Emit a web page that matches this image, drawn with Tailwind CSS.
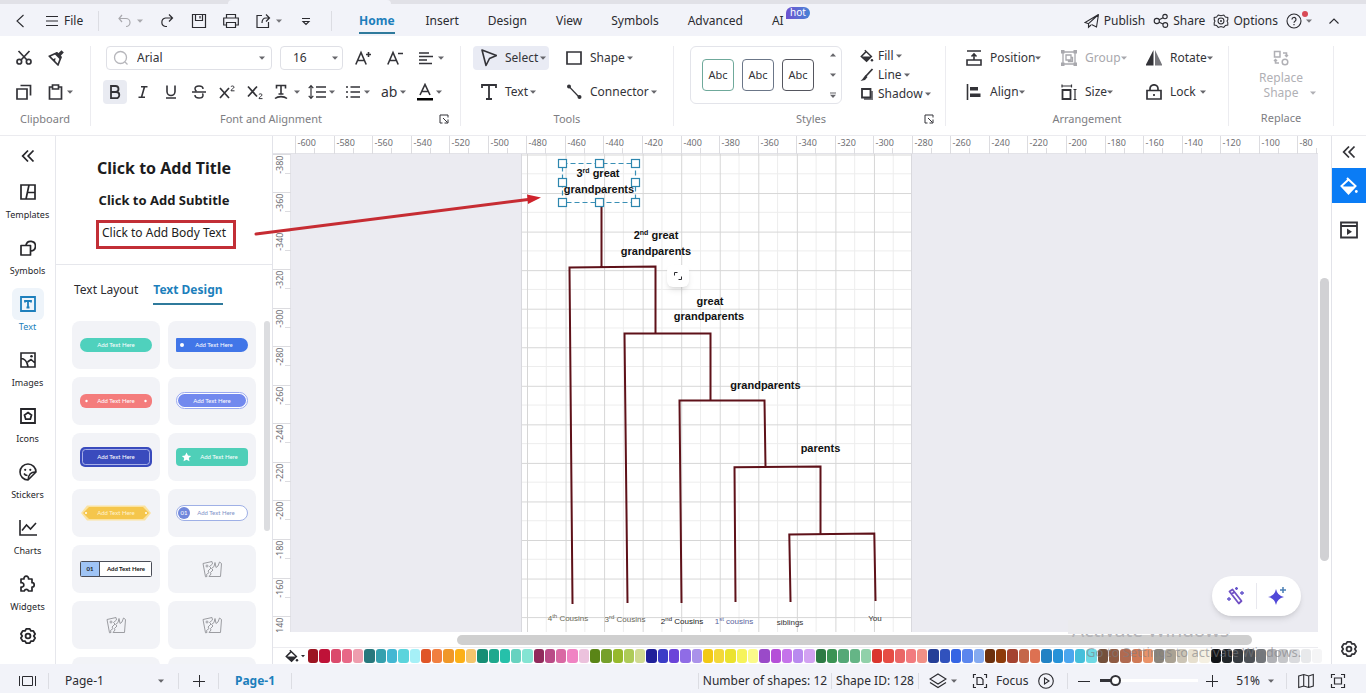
<!DOCTYPE html>
<html lang="en">
<head>
  <meta charset="UTF-8">
  <meta name="viewport" content="width=device-width, initial-scale=1.0">
  <title>Page-1 - Diagram Editor</title>
  <script src="https://cdn.jsdelivr.net/npm/@tailwindcss/browser@4"></script>
</head>
<body class="h-screen flex flex-col overflow-hidden bg-white font-['Noto_Sans',sans-serif] text-xs text-[#2b2b30]">

  <!-- Icon sprite -->
  <svg class="hidden" xmlns="http://www.w3.org/2000/svg">
    <symbol id="caret" viewBox="0 0 6 4"><path d="M0 .5h6L3 3.8z" fill="currentColor"/></symbol>
    <symbol id="caret-up" viewBox="0 0 6 4"><path d="M0 3.5h6L3 .2z" fill="currentColor"/></symbol>
    <symbol id="more" viewBox="0 0 16 16"><path d="M4 5.500h8M5 8.500l3 3 3-3z" fill="none" stroke="currentColor" stroke-width="1.100"/></symbol>
    <symbol id="bucket" viewBox="0 0 16 16"><path d="M5.500 1.500 13 8.500l-5.500 5.500L1.500 8.500 7 3" fill="none" stroke="currentColor" stroke-width="1.700"/><path d="M2 8.500h11l-5.500 5.500z" fill="currentColor"/><circle cx="13.700" cy="12.800" r="1.400" fill="currentColor"/></symbol>
    <symbol id="gear" viewBox="0 0 20 20"><path d="M8 2h4l1.200 2.400 2.700-.1 2 3.500L16.400 10l1.500 2.200-2 3.500-2.700-.1L12 18H8l-1.200-2.400-2.700.1-2-3.500L3.600 10 2.100 7.800l2-3.500 2.700.1z" fill="none" stroke="currentColor" stroke-width="2" stroke-linejoin="round"/><circle cx="10" cy="10" r="2.700" fill="none" stroke="currentColor" stroke-width="2"/></symbol>
    <symbol id="collapse" viewBox="0 0 14 14"><path d="M7 1.500 1.700 7 7 12.500M12.500 1.500 7.200 7l5.300 5.500" fill="none" stroke="currentColor" stroke-width="1.800"/></symbol>
    <symbol id="launcher" viewBox="0 0 10 10"><path d="M3.500 9H1V1h8v2.500M4 4l4.500 4.500M9 5.500V9H5.500" fill="none" stroke="currentColor" stroke-width="1"/></symbol>
    <symbol id="broken" viewBox="0 0 22 18"><g fill="none" stroke="#9c9da2" stroke-width="1" stroke-linejoin="round"><path d="M2 3.500 11 1.500 11.500 4 8.500 6.500 10 8 7 11l1 1.500-2.500 2L6 16.500 4.500 16.800z"/><path d="M14 2.500 13 6.500l-2.500 2 1.500 1.500-2.500 2.500.5 1.500L8 16.500h11.500L20.500 3.500 18.500 2 17 6l-2 1.500z"/><circle cx="6" cy="6" r="1"/></g></symbol>
  </svg>

  <!-- Window edge with the open document tab -->
  <div class="flex h-1 shrink-0 bg-[#e1e1e7]">
    <div class="ml-[228px] w-[163px] rounded-t-sm bg-[#f2f3f9]"></div>
  </div>

  <!-- Menu bar -->
  <header class="flex h-8 shrink-0 items-center bg-[#f2f3f9] pt-0.5">
    <button class="flex w-10 justify-center" aria-label="Back"><svg class="h-4 w-4" viewBox="0 0 16 16"><path d="M11.500 2 5 8l6.500 6" fill="none" stroke="currentColor" stroke-width="1.100"/></svg></button>
    <button class="ml-[6px] flex w-[52px] items-center gap-[6px]"><svg class="h-3 w-3" viewBox="0 0 12 12"><path d="M0 1.500h12M0 6h12M0 10.500h12" stroke="currentColor" stroke-width="1.100"/></svg>File</button>
    <div class="h-5 w-px bg-[#dcdde3]"></div>
    <div class="ml-[17px] flex items-center gap-4">
      <button class="flex items-center gap-[5px] text-[#a9a9ae]" aria-label="Undo"><svg class="h-4 w-4" viewBox="0 0 16 16"><path d="M6 2 3 5.500 6 9M3 5.500h7a4 4 0 0 1 0 8" fill="none" stroke="currentColor" stroke-width="1.200"/></svg><svg class="h-1 w-1.5"><use href="#caret"/></svg></button>
      <button aria-label="Redo"><svg class="h-4 w-4" viewBox="0 0 16 16"><path d="M10 1.500 13.500 5 10 8.500M13.500 5H6.500a4.300 4.300 0 0 0 0 8.500H8" fill="none" stroke="currentColor" stroke-width="1.200"/></svg></button>
      <button aria-label="Save"><svg class="h-4 w-4" viewBox="0 0 16 16"><path d="M1.500 1.500h13v13h-13zM4.500 1.500v6h7v-6M9 3v2.500" fill="none" stroke="currentColor" stroke-width="1.200"/></svg></button>
      <button aria-label="Print"><svg class="h-4 w-4" viewBox="0 0 16 16"><path d="M3.500 5V1.500h9V5M3.500 12H.7V5h14.600v7h-2.800M3.500 9.500h9v5h-9z" fill="none" stroke="currentColor" stroke-width="1.200"/></svg></button>
      <button class="flex items-center gap-[5px]" aria-label="Export"><svg class="h-4 w-4" viewBox="0 0 16 16"><path d="M7 2.500H2v12h11.500V9M11 1.500 14.500 5 11 8.500M14.500 5H11c-3 0-4 2-4 5" fill="none" stroke="currentColor" stroke-width="1.200"/></svg><svg class="h-1 w-1.5 text-[#77777c]"><use href="#caret"/></svg></button>
      <button aria-label="More"><svg class="h-4 w-4"><use href="#more"/></svg></button>
    </div>
    <div class="ml-[17px] h-5 w-px bg-[#dcdde3]"></div>
    <nav class="ml-[27px] flex h-full items-center gap-[29px]">
      <a href="#" class="relative mr-0.5 flex h-full items-center font-bold text-[#1d7fbc] after:absolute after:inset-x-0 after:bottom-0.5 after:h-0.5 after:bg-[#2f7a9c]">Home</a>
      <a href="#">Insert</a>
      <a href="#">Design</a>
      <a href="#">View</a>
      <a href="#">Symbols</a>
      <a href="#">Advanced</a>
      <a href="#" class="relative">AI<span class="absolute -top-1.5 left-3.5 flex h-3 w-6 items-center justify-center rounded-md rounded-bl-none bg-linear-to-r from-[#6b50d0] to-[#4483d6] text-[10px] text-white">hot</span></a>
    </nav>
    <div class="ml-auto flex items-center gap-2 pr-6">
      <button class="flex items-center gap-1"><svg class="h-4 w-4" viewBox="0 0 16 16"><path d="M14.500 1.500 1 9.500l3.500 1.200zM14.500 1.500 4.500 10.700v3.500L7 12M14.500 1.500 12.500 14l-5-2.500" fill="none" stroke="currentColor" stroke-width="1.100"/></svg>Publish</button>
      <button class="flex items-center gap-1"><svg class="h-4 w-4" viewBox="0 0 16 16"><g fill="none" stroke="currentColor" stroke-width="1.100"><circle cx="3.800" cy="8" r="2.600"/><circle cx="12" cy="3.600" r="2.200"/><circle cx="12.300" cy="12" r="2.400"/><path d="m6.200 6.800 3.900-2.100M6.200 9.200l3.900 1.800"/></g></svg>Share</button>
      <button class="flex items-center gap-1"><svg class="h-4 w-4" viewBox="0 0 20 20"><path d="M6.500 2.500 10 3.500l3.500-1 2 2.500 3 .5v3l-1 1.500 1 2v3l-3 .5-2 2.500-3.500-1-3.500 1-2-2.500-3-.5v-3l1-2-1-1.500v-3l3-.5z" fill="none" stroke="currentColor" stroke-width="1.300"/><circle cx="10" cy="10" r="3.700" fill="none" stroke="currentColor" stroke-width="1.300"/><circle cx="10" cy="10" r="1.200" fill="currentColor"/></svg>Options</button>
      <button class="relative flex items-center gap-1" aria-label="Help"><svg class="h-4 w-4" viewBox="0 0 16 16"><circle cx="8" cy="8" r="7" fill="none" stroke="currentColor" stroke-width="1.100"/><path d="M6 6.500a2 2 0 1 1 3 1.700c-.7.400-1 .7-1 1.500M8 11v1.200" fill="none" stroke="currentColor" stroke-width="1.200"/></svg><svg class="h-1 w-1.5 text-[#77777c]"><use href="#caret"/></svg><span class="absolute -top-0.5 left-4 size-1.5 rounded-full bg-[#d84a56]"></span></button>
      <button class="ml-1.5" aria-label="Collapse ribbon"><svg class="h-4 w-4" viewBox="0 0 16 16"><path d="M3.500 10.500 8 6l4.500 4.500" fill="none" stroke="currentColor" stroke-width="1.100"/></svg></button>
    </div>
  </header>

  <!-- Ribbon -->
  <section class="flex h-[100px] shrink-0 border-b border-[#ebebef] pt-[10px] text-[#333338]">
    <div class="flex w-[90px] shrink-0 flex-col">
      <div class="grid grid-cols-[32px_32px] gap-y-[10px] pl-4">
        <button class="flex h-6 items-center" aria-label="Cut"><svg class="h-4 w-4" viewBox="0 0 16 16"><g fill="none" stroke="currentColor" stroke-width="1.700"><circle cx="3.300" cy="11.700" r="2.300"/><circle cx="12.700" cy="11.700" r="2.300"/><path d="M2.500 1 11 10M13.500 1 5 10"/></g></svg></button>
        <button class="flex h-6 items-center" aria-label="Format painter"><svg class="h-4 w-4" viewBox="0 0 16 16"><path d="m9.500 4 4-3.800 2.300 2.300L12 6.500z" fill="currentColor"/><path d="M1.300 6.200 9 2.800l4 4.200-3 8z" fill="none" stroke="currentColor" stroke-width="1.700" stroke-linejoin="round"/><path d="m8.500 2.500 5 5-1 2.500-6-6z" fill="currentColor"/><path d="m4.500 9.500 3-1.500-.5 4z" fill="currentColor"/></svg></button>
        <button class="flex h-6 items-center" aria-label="Copy"><svg class="h-4 w-4" viewBox="0 0 16 16"><path d="M1 5h10v10H1zM4.500 1.500h10v10" fill="none" stroke="currentColor" stroke-width="1.700"/></svg></button>
        <button class="flex h-6 items-center gap-[3px]" aria-label="Paste"><svg class="h-4 w-4 shrink-0" viewBox="0 0 16 16"><path d="M4.500 3H1.500v12h12V3h-3M4.500 1h6v4h-6z" fill="none" stroke="currentColor" stroke-width="1.700"/></svg><svg class="h-1 w-1.5 shrink-0 text-[#66666b]"><use href="#caret"/></svg></button>
      </div>
      <p class="mt-[7px] text-center text-[11px] leading-4 text-[#7d7d82]">Clipboard</p>
    </div>

    <div class="flex h-20 w-[371px] shrink-0 flex-col border-x border-[#ececf0]">
      <div class="flex h-6 items-center gap-2 pl-[15px]">
        <div class="flex h-6 w-[166px] items-center rounded-sm border border-[#dfe0e6] px-1.5">
          <svg class="h-4 w-4 text-[#b6b6bb]" viewBox="0 0 16 16"><circle cx="7.500" cy="7.500" r="6" fill="none" stroke="currentColor" stroke-width="1.300"/><path d="m12 12 2.500 2.500" stroke="currentColor" stroke-width="1.300"/></svg>
          <select aria-label="Font" class="flex-1 appearance-none pl-2 outline-none"><option>Arial</option></select>
          <svg class="h-1 w-1.5 text-[#66666b]"><use href="#caret"/></svg>
        </div>
        <div class="flex h-6 w-[63px] items-center rounded-sm border border-[#dfe0e6] pr-1 pl-3">
          <select aria-label="Font size" class="w-full flex-1 appearance-none outline-none"><option>16</option></select>
          <svg class="h-1 w-1.5 text-[#66666b]"><use href="#caret"/></svg>
        </div>
        <button class="flex size-6 items-center justify-center" aria-label="Increase font size"><svg class="h-4 w-4" viewBox="0 0 16 16"><path d="M.800 14.500 6 2.500l5.200 12M2.800 10.500h6.400M11 4.500h5M13.500 2v5" fill="none" stroke="currentColor" stroke-width="1.600"/></svg></button>
        <button class="flex size-6 items-center justify-center" aria-label="Decrease font size"><svg class="h-4 w-4" viewBox="0 0 16 16"><path d="M.800 14.500 6 2.500l5.200 12M2.800 10.500h6.400M11 3.500h5" fill="none" stroke="currentColor" stroke-width="1.600"/></svg></button>
        <button class="flex h-6 items-center gap-[3px] pl-1" aria-label="Text alignment"><svg class="h-4 w-4" viewBox="0 0 16 16"><path d="M0 3h10M0 6.500h14M0 10h8M0 13.500h13" stroke="currentColor" stroke-width="1.700"/></svg><svg class="h-1 w-1.5 text-[#66666b]"><use href="#caret"/></svg></button>
      </div>
      <div class="mt-[10px] flex h-6 items-center pl-3">
        <div class="flex gap-1">
          <button class="flex size-6 items-center justify-center rounded-sm bg-[#e9ebf2]" aria-label="Bold"><svg class="h-4 w-4" viewBox="0 0 16 16"><path d="M4 2h4.500a3 3 0 0 1 0 6H4zM4 8h5.200a3.100 3.100 0 0 1 0 6.200H4z" fill="none" stroke="currentColor" stroke-width="1.800"/></svg></button>
          <button class="flex size-6 items-center justify-center" aria-label="Italic"><svg class="h-4 w-4" viewBox="0 0 16 16"><path d="M6 2.700h6.500M3.500 13.300H10M9.500 2.700 6.500 13.300" fill="none" stroke="currentColor" stroke-width="1.600"/></svg></button>
          <button class="flex size-6 items-center justify-center" aria-label="Underline"><svg class="h-4 w-4" viewBox="0 0 16 16"><path d="M4 1.500v6a4 4 0 0 0 8 0v-6M3 14h10" fill="none" stroke="currentColor" stroke-width="1.600"/></svg></button>
          <button class="flex size-6 items-center justify-center" aria-label="Strikethrough"><svg class="h-4 w-4" viewBox="0 0 16 16"><path d="M1 8h14M12 5c0-2-1.500-3-4-3S4 3 4 4.800c0 1 .5 1.700 1.500 2.200M4 11c0 2 1.500 3 4 3s4-1 4-2.800c0-.7-.2-1.200-.6-1.700" fill="none" stroke="currentColor" stroke-width="1.500"/></svg></button>
          <button class="flex size-6 items-center justify-center" aria-label="Superscript"><svg class="h-4 w-4" viewBox="0 0 16 16"><path d="m1 4 9 10M10 4 1 14" stroke="currentColor" stroke-width="1.700"/><path d="M12 3c0-1.200 3-1.500 3 .2C15 4.500 12 5 12 6.800h3.500" fill="none" stroke="currentColor"/></svg></button>
          <button class="flex size-6 items-center justify-center" aria-label="Subscript"><svg class="h-4 w-4" viewBox="0 0 16 16"><path d="m1 2.500 9 10M10 2.500l-9 10" stroke="currentColor" stroke-width="1.700"/><path d="M12 10.800c0-1.200 3-1.500 3 .2 0 1.300-3 1.800-3 3.600h3.500" fill="none" stroke="currentColor"/></svg></button>
        </div>
        <button class="ml-1 flex w-9 items-center gap-[5px] pl-0.5" aria-label="Text case"><svg class="h-4 w-4" viewBox="0 0 16 16"><path d="M3.500 4.500v-3h9v3M8 1.500v8.500M5.500 10h5M2 14.500c3-2.500 9-2.500 12 0" fill="none" stroke="currentColor" stroke-width="1.600"/></svg><svg class="h-1 w-1.5 text-[#66666b]"><use href="#caret"/></svg></button>
        <button class="flex w-9 items-center gap-[3px] pl-px" aria-label="Line spacing"><svg class="h-4 w-[18px]" viewBox="0 0 18 16"><path d="M8 3h10M8 8h10M8 13h10" stroke="currentColor" stroke-width="1.700"/><path d="M3 1.500v13M.7 4.200 3 1.700l2.300 2.500M.7 11.800 3 14.300l2.300-2.500" fill="none" stroke="currentColor" stroke-width="1.200"/></svg><svg class="h-1 w-1.5 text-[#66666b]"><use href="#caret"/></svg></button>
        <button class="flex w-9 items-center gap-[3px] pl-0.5" aria-label="Bullets"><svg class="h-4 w-4" viewBox="0 0 16 16"><path d="M1 3h2M1 8h2M1 13h2M5.500 3H15M5.500 8H15M5.500 13H15" stroke="currentColor" stroke-width="1.600"/></svg><svg class="h-1 w-1.5 text-[#66666b]"><use href="#caret"/></svg></button>
        <button class="flex w-9 items-center gap-[3px] pl-0.5 text-sm leading-none" aria-label="Highlight">ab<svg class="h-1 w-1.5 text-[#66666b]"><use href="#caret"/></svg></button>
        <button class="flex w-9 items-center gap-[3px] pl-0.5" aria-label="Font colour"><svg class="h-[18px] w-4" viewBox="0 0 16 18"><path d="M3 12 8 1.500 13 12M4.800 8.500h6.400" fill="none" stroke="currentColor" stroke-width="1.600"/><path d="M0 15h16v2.500H0z" fill="#000"/></svg><svg class="h-1 w-1.5 text-[#66666b]"><use href="#caret"/></svg></button>
      </div>
      <div class="mt-[7px] flex items-center pr-[11px] pl-6 text-[11px] leading-4 text-[#7d7d82]"><p class="flex-1 pr-3 text-center">Font and Alignment</p><button aria-label="Font settings"><svg class="h-2.5 w-2.5 text-[#333338]"><use href="#launcher"/></svg></button></div>
    </div>

    <div class="flex h-20 w-[213px] shrink-0 flex-col border-r border-[#ececf0]">
      <div class="grid grid-cols-[76px_auto] gap-x-[9px] gap-y-[10px] pl-3">
        <button class="flex h-6 items-center rounded-sm bg-[#e9ebf4] pl-2"><svg class="mr-2 h-[18px] w-4" viewBox="0 0 16 18"><path d="m1 1 14.500 5.500-7 3-3.500 7z" fill="none" stroke="currentColor" stroke-width="1.600" stroke-linejoin="round"/></svg>Select<svg class="ml-0.5 h-1 w-1.5 text-[#66666b]"><use href="#caret"/></svg></button>
        <button class="flex h-6 items-center pl-2"><svg class="mr-2 h-4 w-4" viewBox="0 0 16 16"><path d="M1 2h14v12H1z" fill="none" stroke="currentColor" stroke-width="1.700"/></svg>Shape<svg class="ml-0.5 h-1 w-1.5 text-[#66666b]"><use href="#caret"/></svg></button>
        <button class="flex h-6 items-center pl-2"><svg class="mr-2 h-4 w-4" viewBox="0 0 16 16"><path d="M1 4V1h14v3M8 1v14M5 15h6" fill="none" stroke="currentColor" stroke-width="1.800"/></svg>Text<svg class="ml-0.5 h-1 w-1.5 text-[#66666b]"><use href="#caret"/></svg></button>
        <button class="flex h-6 items-center pl-2"><svg class="mr-2 h-4 w-4" viewBox="0 0 16 16"><path d="m3 2.500 10.500 11" stroke="currentColor" stroke-width="1.200"/><circle cx="3" cy="2.500" r="2" fill="currentColor"/><circle cx="13.500" cy="13" r="2" fill="currentColor"/></svg>Connector<svg class="ml-0.5 h-1 w-1.5 text-[#66666b]"><use href="#caret"/></svg></button>
      </div>
      <p class="mt-[7px] text-center text-[11px] leading-4 text-[#7d7d82]">Tools</p>
    </div>

    <div class="flex h-20 w-[272px] shrink-0 flex-col border-r border-[#ececf0]">
      <div class="flex h-[58px] pl-4">
        <div class="flex w-[152px] items-center gap-2 rounded-md border border-[#e3e4ea] pl-[11px] text-[11px]">
          <button class="size-8 rounded-sm border border-[#6fa99b]">Abc</button>
          <button class="size-8 rounded-sm border border-[#6b7688]">Abc</button>
          <button class="size-8 rounded-sm border border-[#55565f]">Abc</button>
          <div class="ml-2 flex h-full flex-col items-center justify-between py-0.5 text-[#66666b]">
            <button class="flex h-3 items-center" aria-label="Previous styles"><svg class="h-1 w-1.5"><use href="#caret-up"/></svg></button>
            <button class="flex h-3 items-center" aria-label="Next styles"><svg class="h-1 w-1.5"><use href="#caret"/></svg></button>
            <button class="flex h-3 items-center" aria-label="All styles"><svg class="h-1.5 w-1.5" viewBox="0 0 6 6"><path d="M0 .5h6v1H0zM0 2.700h6L3 6z" fill="currentColor"/></svg></button>
          </div>
        </div>
        <div class="ml-[18px] flex flex-col">
          <button class="flex h-5 items-center"><svg class="mr-1 h-3.5 w-3.5"><use href="#bucket"/></svg>Fill<svg class="ml-0.5 h-1 w-1.5 text-[#66666b]"><use href="#caret"/></svg></button>
          <button class="flex h-5 items-center"><svg class="mr-1 h-3.5 w-3.5" viewBox="0 0 14 14"><path d="M12.500 1 6 8" stroke="currentColor" stroke-width="1.800"/><path d="M5.500 7 7.500 9 5 12 .5 13 2.500 11z" fill="currentColor"/></svg>Line<svg class="ml-0.5 h-1 w-1.5 text-[#66666b]"><use href="#caret"/></svg></button>
          <button class="flex h-5 items-center"><svg class="mr-1 h-3.5 w-3.5" viewBox="0 0 14 14"><path d="M4 4h9v9H4z" fill="#77777c"/><path d="M2 2h8.500v8.500H2z" fill="#fff" stroke="currentColor" stroke-width="1.800"/></svg>Shadow<svg class="ml-0.5 h-1 w-1.5 text-[#66666b]"><use href="#caret"/></svg></button>
        </div>
      </div>
      <div class="mt-[7px] flex items-center pr-[11px] pl-6 text-[11px] leading-4 text-[#7d7d82]"><p class="flex-1 text-center">Styles</p><button aria-label="Style settings"><svg class="h-2.5 w-2.5 text-[#333338]"><use href="#launcher"/></svg></button></div>
    </div>

    <div class="flex h-20 w-[283px] shrink-0 flex-col border-r border-[#ececf0]">
      <div class="grid grid-cols-[95px_85px_auto] gap-y-[10px] pl-5">
        <button class="flex h-6 items-center"><svg class="mr-2 h-4 w-4" viewBox="0 0 16 16"><path d="M1 1h14M1 10v5h14v-5zM8 10V4M5.500 6.500 8 4l2.500 2.500" fill="none" stroke="currentColor" stroke-width="1.600"/></svg>Position<svg class="h-1 w-1.5 text-[#66666b]"><use href="#caret"/></svg></button>
        <button class="flex h-6 items-center text-[#a8a8ad]"><svg class="mr-2 h-4 w-4 shrink-0" viewBox="0 0 16 16"><g fill="none" stroke="currentColor" stroke-width="1.300"><path d="M2 2h12v12H2zM5 5h5v5H5zM7.500 10v1.500h4v-4H10"/></g><path d="M0 0h3.500v3.500H0zM12.500 0H16v3.500h-3.500zM0 12.500h3.500V16H0zM12.500 12.500H16V16h-3.500z" fill="currentColor"/></svg>Group<svg class="h-1 w-1.5"><use href="#caret"/></svg></button>
        <button class="flex h-6 items-center"><svg class="mr-2 h-4 w-4" viewBox="0 0 16 16"><path d="M7.500 0v15.500H-.5z" fill="currentColor"/><path d="M9 0v15.500h7.500z" fill="#77777c"/></svg>Rotate<svg class="h-1 w-1.5 text-[#66666b]"><use href="#caret"/></svg></button>
        <button class="flex h-6 items-center"><svg class="mr-2 h-4 w-4" viewBox="0 0 16 16"><path d="M1.500 0v16" stroke="currentColor" stroke-width="1.600"/><path d="M4 3h8v3.500H4zM4 9.500h10.500V13H4z" fill="currentColor"/></svg>Align<svg class="h-1 w-1.5 text-[#66666b]"><use href="#caret"/></svg></button>
        <button class="flex h-6 items-center"><svg class="mr-2 h-4 w-4 shrink-0" viewBox="0 0 16 16"><path d="M1.500 6h8v9h-8z" fill="none" stroke="currentColor" stroke-width="1.800"/><path d="M1 2h9.500M1 .5v3M10.500.5v3M14 5.500v10M12.500 5.500h3M12.500 15.500h3" stroke="currentColor" stroke-width="1.200"/></svg>Size<svg class="h-1 w-1.5 text-[#66666b]"><use href="#caret"/></svg></button>
        <button class="flex h-6 items-center"><svg class="mr-2 h-4 w-4" viewBox="0 0 16 16"><path d="M1 6.500h14V15H1zM4 6.500V4.800a4 4 0 0 1 8 0v1.700M8 10v2" fill="none" stroke="currentColor" stroke-width="1.700"/></svg>Lock<svg class="ml-1 h-1 w-1.5 text-[#66666b]"><use href="#caret"/></svg></button>
      </div>
      <p class="mt-[7px] text-center text-[11px] leading-4 text-[#7d7d82]">Arrangement</p>
    </div>

    <div class="flex h-20 w-[105px] shrink-0 flex-col border-r border-[#ececf0]">
      <button class="flex h-[58px] flex-col items-center pt-1 text-[#b0b0b5]">
        <svg class="h-4 w-4" viewBox="0 0 16 16"><g fill="none" stroke="currentColor" stroke-width="1.500"><path d="M1.500 1.500h5.500v5.500H1.500z"/><circle cx="12" cy="12" r="2.800"/><path d="M10 3h3.500v3M12 5l1.500 1.500L15 5M6 13H2.500v-3M1 11l1.500-1.500L4 11"/></g></svg>
        <span class="mt-1 leading-4">Replace</span>
        <span class="-mt-px flex items-center gap-3 pl-[18px] leading-4">Shape<svg class="h-1 w-1.5"><use href="#caret"/></svg></span>
      </button>
      <p class="mt-[7px] text-center text-[11px] leading-4 text-[#7d7d82]">Replace</p>
    </div>
  </section>

  <main class="relative flex min-h-0 flex-1">
    <!-- Library rail -->
    <aside class="flex w-14 shrink-0 flex-col overflow-hidden border-r border-[#e6e7ec] text-[9px] leading-[14px] text-[#26262a]">
      <button class="flex h-10 shrink-0 items-center justify-center" aria-label="Collapse library"><svg class="h-3.5 w-3.5"><use href="#collapse"/></svg></button>
      <button class="flex h-14 shrink-0 flex-col items-center"><span class="flex size-8 items-center justify-center"><svg class="h-4 w-4" viewBox="0 0 16 16"><path d="M1 1h14v14H1zM9 1 6 15M7.500 8.500H15" fill="none" stroke="currentColor" stroke-width="1.700"/></svg></span>Templates</button>
      <button class="flex h-14 shrink-0 flex-col items-center"><span class="flex size-8 items-center justify-center"><svg class="h-4 w-4" viewBox="0 0 16 16"><path d="M1 5.500h9.500V15H1zM6 5a4.800 4.800 0 1 1 5 6" fill="none" stroke="currentColor" stroke-width="1.700" stroke-linejoin="round"/></svg></span>Symbols</button>
      <button class="flex h-14 shrink-0 flex-col items-center text-[#1d7fbc]"><span class="flex size-8 items-center justify-center rounded-md bg-[#eef4fa]"><svg class="h-4 w-4" viewBox="0 0 16 16"><path d="M1 1h14v14H1zM5 6.500V5h6v1.500M8 5v6.500M6.500 11.500h3" fill="none" stroke="currentColor" stroke-width="1.800"/></svg></span>Text</button>
      <button class="flex h-14 shrink-0 flex-col items-center"><span class="flex size-8 items-center justify-center"><svg class="h-4 w-4" viewBox="0 0 16 16"><path d="M1 1h14v14H1zM1 6.500c4 0 6 3 7 8M7.500 10 11 7.500l4 3.500" fill="none" stroke="currentColor" stroke-width="1.600"/><circle cx="11.500" cy="4.300" r="1.300" fill="currentColor"/></svg></span>Images</button>
      <button class="flex h-14 shrink-0 flex-col items-center"><span class="flex size-8 items-center justify-center"><svg class="h-4 w-4" viewBox="0 0 16 16"><path d="M1 1h14v14H1zM8 4.500 11.500 7l-1.200 4.200H5.700L4.500 7z" fill="none" stroke="currentColor" stroke-width="1.800"/></svg></span>Icons</button>
      <button class="flex h-14 shrink-0 flex-col items-center"><span class="flex size-8 items-center justify-center"><svg class="h-[18px] w-[18px]" viewBox="0 0 18 18"><path d="M17 9A8 8 0 1 0 9 17zM17 9c-5-.5-7.500 2.500-8 8M5 10.500c.8 1.500 2 2 3.500 2" fill="none" stroke="currentColor" stroke-width="1.600"/><circle cx="6.200" cy="6.800" r="1.100" fill="currentColor"/><circle cx="11.300" cy="6.800" r="1.100" fill="currentColor"/></svg></span>Stickers</button>
      <button class="flex h-14 shrink-0 flex-col items-center"><span class="flex size-8 items-center justify-center"><svg class="h-4 w-[18px]" viewBox="0 0 18 16"><path d="M1 0v15h17M3 10.500 7.500 5l4 4L17 3" fill="none" stroke="currentColor" stroke-width="1.600"/></svg></span>Charts</button>
      <button class="flex h-14 shrink-0 flex-col items-center"><span class="flex size-8 items-center justify-center"><svg class="h-[18px] w-[18px]" viewBox="0 0 18 18"><path d="M2 4h3a2.300 2.300 0 1 1 4.500 0H13v3.700a2.200 2.200 0 1 1 0 4.400V16H9.500a2.200 2.200 0 0 0-4.200 0H2v-4a2.200 2.200 0 1 0 0-4.200z" fill="none" stroke="currentColor" stroke-width="1.700" stroke-linejoin="round"/></svg></span>Widgets</button>
      <button class="flex h-7 shrink-0 items-center justify-center pb-1" aria-label="Library settings"><svg class="h-[18px] w-[18px]"><use href="#gear"/></svg></button>
    </aside>

    <!-- Text panel -->
    <aside class="flex w-[217px] shrink-0 flex-col border-r border-[#e2e3e9]">
      <div class="flex h-[129px] shrink-0 flex-col items-center border-b border-[#e6e7ec] pt-5 text-[#1c1c20]">
        <button class="h-6 text-base leading-6 font-bold">Click to Add Title</button>
        <button class="mt-2 h-6 text-[13px] leading-6 font-bold">Click to Add Subtitle</button>
        <button class="mt-2 ml-1 h-[29px] w-[140px] border-3 border-[#c22f36] pr-1 pb-1 text-xs">Click to Add Body Text</button>
      </div>
      <div class="flex h-10 shrink-0 gap-[15px] pt-[15px] pl-[18px] leading-5">
        <button class="h-[25px] pb-[5px]">Text Layout</button>
        <button class="h-[25px] border-b-2 border-[#2f7a9c] pb-[3px] font-bold text-[#1d7fbc]">Text Design</button>
      </div>
      <div class="mt-4 flex min-h-0 flex-1 overflow-hidden">
        <div class="grid auto-rows-[48px] grid-cols-[88px_88px] gap-2 pl-4 font-['Lato',sans-serif] text-[6px]">
          <button class="rounded-lg bg-[#f2f3f7]"><svg viewBox="0 0 88 48"><rect x="8" y="17" width="72" height="14" rx="7" fill="#4fd1bd"/><text x="44" y="26" text-anchor="middle" fill="#fff">Add Text Here</text></svg></button>
          <button class="rounded-lg bg-[#f2f3f7]"><svg viewBox="0 0 88 48"><path d="M9 17h64a7 7 0 0 1 0 14H9q-1 0-1-1V18q0-1 1-1z" fill="#4176e8"/><circle cx="14" cy="24" r="2" fill="#fff"/><text x="46" y="26" text-anchor="middle" fill="#fff">Add Text Here</text></svg></button>
          <button class="rounded-lg bg-[#f2f3f7]"><svg viewBox="0 0 88 48"><rect x="8" y="17" width="72" height="14" rx="6" fill="#f47c7c"/><circle cx="14.500" cy="24" r="1.200" fill="#fff"/><circle cx="73.500" cy="24" r="1.200" fill="#fff"/><text x="44" y="26" text-anchor="middle" fill="#fff">Add Text Here</text></svg></button>
          <button class="rounded-lg bg-[#f2f3f7]"><svg viewBox="0 0 88 48"><rect x="8.500" y="15.500" width="71" height="16" rx="8" fill="#fff" stroke="#9aa9f0"/><rect x="10" y="17" width="68" height="13" rx="6.500" fill="#7289ee"/><text x="44" y="25.500" text-anchor="middle" fill="#fff">Add Text Here</text></svg></button>
          <button class="rounded-lg bg-[#f2f3f7]"><svg viewBox="0 0 88 48"><rect x="8" y="14" width="72" height="20" rx="5" fill="#3a4bbd"/><rect x="10.500" y="16.500" width="67" height="15" rx="3" fill="none" stroke="#c3c9f2" stroke-width=".8"/><text x="44" y="26" text-anchor="middle" fill="#fff">Add Text Here</text></svg></button>
          <button class="rounded-lg bg-[#f2f3f7]"><svg viewBox="0 0 88 48"><rect x="8" y="15" width="72" height="18" rx="4" fill="#4fcfb8"/><path d="m18.500 19.500 1.500 3 3.200.4-2.400 2.200.7 3.200-3-1.600-3 1.600.7-3.200-2.400-2.200 3.200-.4z" fill="#fff"/><text x="51" y="26" text-anchor="middle" fill="#fff">Add Text Here</text></svg></button>
          <button class="rounded-lg bg-[#f2f3f7]"><svg viewBox="0 0 88 48"><path d="M15 16.500h58l6 7.500-6 7.500H15L9 24z" fill="#fbe3a0"/><path d="M17 18h54l6 6-6 6H17l-6-6z" fill="#f5c64c"/><circle cx="14" cy="24" r="1" fill="#fff"/><circle cx="74" cy="24" r="1" fill="#fff"/><text x="44" y="26" text-anchor="middle" fill="#fff3cf">Add Text Here</text></svg></button>
          <button class="rounded-lg bg-[#f2f3f7]"><svg viewBox="0 0 88 48"><rect x="8.500" y="16.500" width="71" height="15" rx="7.500" fill="#fff" stroke="#9fb0e6"/><circle cx="16" cy="24" r="6" fill="#7188dc"/><text x="16" y="26" text-anchor="middle" fill="#fff">01</text><text x="48" y="26" text-anchor="middle" fill="#7f92c9">Add Text Here</text></svg></button>
          <button class="rounded-lg bg-[#f2f3f7]"><svg viewBox="0 0 88 48"><rect x="8.500" y="16.500" width="71" height="15" rx="1" fill="#fff" stroke="#4a4d57"/><path d="M9 17h18.500v14H9z" fill="#9fc4f5"/><path d="M27.500 17v14" stroke="#4a4d57"/><text x="18" y="26" text-anchor="middle" fill="#222" font-weight="bold">01</text><text x="54" y="26" text-anchor="middle" fill="#111" font-weight="bold">Add Text Here</text></svg></button>
          <button class="flex items-center justify-center rounded-lg bg-[#f2f3f7]" aria-label="Text design 10"><svg class="h-[18px] w-[22px]"><use href="#broken"/></svg></button>
          <button class="flex items-center justify-center rounded-lg bg-[#f2f3f7]" aria-label="Text design 11"><svg class="h-[18px] w-[22px]"><use href="#broken"/></svg></button>
          <button class="flex items-center justify-center rounded-lg bg-[#f2f3f7]" aria-label="Text design 12"><svg class="h-[18px] w-[22px]"><use href="#broken"/></svg></button>
          <button class="rounded-lg bg-[#f2f3f7]" aria-label="Text design 13"></button>
          <button class="rounded-lg bg-[#f2f3f7]" aria-label="Text design 14"></button>
        </div>
        <div class="ml-2 h-[210px] w-1.5 rounded-full bg-[#dcdde0]"></div>
      </div>
    </aside>

    <!-- Drawing area -->
    <section class="flex min-w-0 flex-1 flex-col">
      <svg id="ruler-x" class="h-[18px] w-full shrink-0 text-[9px]"></svg>
      <div class="flex min-h-0 flex-1">
        <svg id="ruler-y" class="h-full w-[18px] shrink-0 text-[9px]"></svg>
        <div class="relative min-w-0 flex-1 overflow-hidden bg-[#ebebf1]">
          <svg class="absolute top-0 left-[230px] h-full w-[391px] bg-white font-['Liberation_Sans',Arial,sans-serif] text-[8px]" viewBox="521 154 391 478" preserveAspectRatio="xMinYMin slice">
            <defs>
              <pattern id="grid" x="527" y="154.500" width="38.550" height="38.550" patternUnits="userSpaceOnUse">
                <path d="M19.300 0v38.600M0 19.300h38.600" stroke="#ededed"/>
                <path d="M.5 0v38.600M0 .5h38.600" stroke="#d6d6d6"/>
              </pattern>
            </defs>
            <rect x="521" y="154" width="391" height="478" fill="url(#grid)"/>
            <path d="M521.500 154v478M911.500 154v478" stroke="#d9d9de"/>
            <g fill="none" stroke="#5e1119" stroke-width="2" stroke-linecap="square">
              <path d="M601.500 207v59.500M572.500 603 569.500 267.500 655.500 266.500V333"/>
              <path d="M627.500 602 624.500 333.500H710.500V400"/>
              <path d="M681.500 602 679.500 400.500H764.500L765.500 466"/>
              <path d="M735.500 601 734.500 467.300 820.500 466.500V533"/>
              <path d="M790.500 601 789.300 534.500 874.300 533.500 875.500 600"/>
            </g>
            <g font-size="11" font-weight="bold" text-anchor="middle" fill="#111">
              <text x="598" y="177">3<tspan font-size="7" dy="-4">rd</tspan><tspan dy="4"> great</tspan></text><text x="599" y="193">grandparents</text>
              <text x="656" y="239">2<tspan font-size="7" dy="-4">nd</tspan><tspan dy="4"> great</tspan></text><text x="656" y="255">grandparents</text>
              <text x="710" y="305">great</text><text x="709" y="320">grandparents</text>
              <text x="765.500" y="389">grandparents</text>
              <text x="820.500" y="452">parents</text>
            </g>
            <g text-anchor="middle">
              <text x="568" y="621" fill="#6b6b58">4<tspan font-size="6" dy="-3">th</tspan><tspan dy="3"> Cousins</tspan></text>
              <text x="625" y="622" fill="#66665a">3<tspan font-size="6" dy="-3">rd</tspan><tspan dy="3"> Cousins</tspan></text>
              <text x="682" y="624" fill="#222">2<tspan font-size="6" dy="-3">nd</tspan><tspan dy="3"> Cousins</tspan></text>
              <text x="734" y="624" fill="#5a649c">1<tspan font-size="6" dy="-3">st</tspan><tspan dy="3"> cousins</tspan></text>
              <text x="790" y="625" fill="#333">siblings</text>
              <text x="875" y="621" fill="#333">You</text>
            </g>
            <!-- Selection frame -->
            <rect x="562.500" y="163.500" width="73" height="39" fill="none" stroke="#3a8fb5" stroke-width="1.200" stroke-dasharray="5 3"/>
            <g fill="#fff" stroke="#2d86ae" stroke-width="1.200">
              <rect x="558.500" y="159.500" width="8" height="8"/><rect x="595.500" y="159.500" width="8" height="8"/><rect x="631.500" y="159.500" width="8" height="8"/>
              <rect x="558.500" y="178.500" width="8" height="8"/><rect x="631.500" y="178.500" width="8" height="8"/>
              <rect x="558.500" y="198.500" width="8" height="8"/><rect x="595.500" y="198.500" width="8" height="8"/><rect x="631.500" y="198.500" width="8" height="8"/>
            </g>
          </svg>
          <button class="absolute top-[111px] left-[376px] flex size-[22px] items-center justify-center rounded-md bg-white shadow-md" aria-label="Expand"><svg class="h-2.5 w-2.5" viewBox="0 0 10 10"><path d="M1.500 4.500v-3h3M8.500 5.500v3h-3" fill="none" stroke="currentColor"/></svg></button>
          <div class="absolute right-[17px] bottom-4 flex h-10 w-[89px] items-center rounded-full bg-white shadow-md">
            <button class="flex flex-1 justify-center border-r border-[#e8e8ee] py-1 pl-1" aria-label="Magic tools"><svg class="h-[18px] w-[18px]" viewBox="0 0 18 18"><path d="M2.500 4.500 5.500 2.500 14.500 14l-2.700 2.500zM4.500 7 7.500 5" fill="none" stroke="#7150c4" stroke-width="1.800" stroke-linejoin="round"/><path d="M9.500 0v3M8 1.500h3M15 4v4M13 6h4M2 10v4M0 12h4" stroke="#6454cc" stroke-width="1.300"/></svg></button>
            <button class="flex flex-1 justify-center pr-1" aria-label="AI assistant"><svg class="h-[18px] w-[18px]" viewBox="0 0 18 18"><path d="M8 2q1.300 6.700 8 8-6.700 1.300-8 8-1.300-6.700-8-8 6.700-1.300 8-8z" fill="#5148d8"/><path d="M15 0v6M12 3h6" stroke="#4a7fb5" stroke-width="1.500"/></svg></button>
          </div>
        </div>
      </div>
      <div class="flex h-4 shrink-0 items-center border-b border-[#ececf0] pr-[66px] pl-[184px]"><div class="h-2.5 flex-1 rounded-full bg-[#cfcfcf]"></div></div>
      <div class="flex h-4 shrink-0 items-center">
        <button class="flex w-[35px] shrink-0 items-center gap-0.5 pl-3" aria-label="Fill colour"><svg class="h-3.5 w-3.5 shrink-0"><use href="#bucket"/></svg><svg class="h-1 w-1 shrink-0"><use href="#caret"/></svg></button>
        <div id="swatches" class="-mr-1 flex h-3.5 flex-1 gap-px"></div>
      </div>
    </section>

    <div class="flex w-[13px] shrink-0 flex-col items-center"><div class="mt-[142px] h-[283px] w-[9px] rounded-full bg-[#d1d1d4]"></div></div>

    <!-- Property rail -->
    <aside class="flex w-[35px] shrink-0 flex-col items-center border-l border-[#e2e3e9] text-[#333338]">
      <button class="flex h-8 items-center" aria-label="Expand properties"><svg class="h-3.5 w-3.5"><use href="#collapse"/></svg></button>
      <button class="flex h-[35px] w-full items-center justify-center bg-[#0a7cf5] text-white" aria-label="Fill"><svg class="h-[18px] w-[18px]" viewBox="0 0 18 18"><path d="m7 1 8.500 8-7 7.500L1.500 9 8 3" fill="none" stroke="currentColor" stroke-width="2"/><path d="M2 9.500h13L8.500 16z" fill="currentColor"/><circle cx="16.300" cy="14.500" r="1.400" fill="currentColor"/></svg></button>
      <button class="mt-[18px]" aria-label="Presentation"><svg class="h-[18px] w-[18px]" viewBox="0 0 18 18"><path d="M1 1.500h16v15H1zM1 5h16" fill="none" stroke="currentColor" stroke-width="1.800"/><path d="m7 7.500 5 3.200-5 3.200z" fill="currentColor"/></svg></button>
      <button class="mt-auto mb-1.5" aria-label="Settings"><svg class="h-[18px] w-[18px]"><use href="#gear"/></svg></button>
    </aside>

    <!-- Pointer from the body text button to the shape -->
    <svg class="pointer-events-none absolute top-[56px] left-[254px] h-[48px] w-[290px]" viewBox="254 192 290 48"><path d="M256 234 528 199.500" stroke="#c62c33" stroke-width="3" stroke-linecap="round"/><path d="m527 194.500 14 3-13 6.500z" fill="#cf232c"/></svg>

    <!-- System activation notice -->
    <div class="pointer-events-none absolute right-[54px] bottom-1 w-[244px] pl-1 text-[#7d7d82]/60">
      <p class="text-[19px] leading-5 text-[#b4b4b8]">Activate Windows</p>
      <div class="absolute top-0 left-0 h-3.5 w-[162px] bg-[#ebebee]"></div>
      <p class="mt-1 pl-3.5 text-[13px] leading-4">Go to Settings to activate Windows.</p>
    </div>
  </main>

  <!-- Status bar -->
  <footer class="flex h-[29px] shrink-0 items-center bg-[#f2f3f9] pt-1">
    <button class="flex w-12 justify-center pl-1.5" aria-label="Page view"><svg class="h-3 w-[17px]" viewBox="0 0 17 12"><path d="M.5 1v10M16.500 1v10M3.500 1.500h10v9h-10z" fill="none" stroke="currentColor"/></svg></button>
    <div class="flex h-4 w-[131px] items-center border-x border-[#dcdde3] pr-3.5 pl-4">
      <select aria-label="Page" class="w-full flex-1 appearance-none outline-none"><option>Page-1</option></select>
      <svg class="h-1 w-1.5 text-[#66666b]"><use href="#caret"/></svg>
    </div>
    <button class="flex h-4 w-10 items-center justify-center border-r border-[#dcdde3]" aria-label="Add page"><svg class="h-3 w-3" viewBox="0 0 12 12"><path d="M0 6.500h12M6.500 0v12" stroke="currentColor"/></svg></button>
    <a href="#" class="flex h-4 w-[73px] items-center justify-center border-r border-[#dcdde3] font-bold text-[#1d7fbc]">Page-1</a>
    <div class="ml-auto flex h-4 w-[134px] items-center justify-center border-x border-[#dcdde3] whitespace-nowrap">Number of shapes: 12</div>
    <div class="flex h-4 w-[87px] items-center justify-center border-r border-[#dcdde3] whitespace-nowrap">Shape ID: 128</div>
    <div class="flex h-4 w-[149px] items-center border-r border-[#dcdde3] pl-2.5">
      <button class="flex items-center gap-1" aria-label="Layers"><svg class="h-4 w-[18px]" viewBox="0 0 18 16"><path d="m9 1 8 5-8 5-8-5zM1 9.500l8 5 8-5" fill="none" stroke="currentColor" stroke-width="1.200"/></svg><svg class="h-1 w-1.5 text-[#66666b]"><use href="#caret"/></svg></button>
      <button class="ml-[15px] flex items-center gap-2"><svg class="h-4 w-4" viewBox="0 0 16 16"><path d="M4 1.500H1.500V5M1.500 11v3.500H4M12 1.500h2.500V5M14.500 11v3.500H12M5 4.500h4l2 2v5H5z" fill="none" stroke="currentColor" stroke-width="1.200"/></svg>Focus</button>
      <button class="ml-2.5" aria-label="Play"><svg class="h-4 w-4" viewBox="0 0 16 16"><circle cx="8" cy="8" r="7.300" fill="none" stroke="currentColor" stroke-width="1.100"/><path d="m6.500 5 4.500 3-4.500 3z" fill="none" stroke="currentColor" stroke-width="1.100"/></svg></button>
    </div>
    <div class="flex h-4 w-[219px] items-center border-r border-[#dcdde3] pl-2.5">
      <button aria-label="Zoom out"><svg class="h-3 w-3" viewBox="0 0 12 12"><path d="M0 6.500h12" stroke="currentColor"/></svg></button>
      <input type="range" aria-label="Zoom" min="0" max="100" value="11" class="ml-2.5 h-3.5 w-[98px] appearance-none bg-transparent [&::-webkit-slider-runnable-track]:h-[3px] [&::-webkit-slider-runnable-track]:bg-linear-to-r [&::-webkit-slider-runnable-track]:from-[#333338] [&::-webkit-slider-runnable-track]:from-12% [&::-webkit-slider-runnable-track]:to-white [&::-webkit-slider-runnable-track]:to-12% [&::-webkit-slider-thumb]:-mt-1 [&::-webkit-slider-thumb]:size-[11px] [&::-webkit-slider-thumb]:appearance-none [&::-webkit-slider-thumb]:rounded-full [&::-webkit-slider-thumb]:border-2 [&::-webkit-slider-thumb]:border-[#333338] [&::-webkit-slider-thumb]:bg-white">
      <button class="ml-2" aria-label="Zoom in"><svg class="h-3 w-3" viewBox="0 0 12 12"><path d="M0 6.500h12M6.500 0v12" stroke="currentColor"/></svg></button>
      <button class="ml-auto flex items-center gap-2 pr-3">51%<svg class="h-1 w-1.5 text-[#66666b]"><use href="#caret"/></svg></button>
    </div>
    <button class="ml-[11px]" aria-label="Overview"><svg class="h-4 w-4" viewBox="0 0 16 16"><path d="m.7 3 5-1.500 5 1.500 4.600-1.500V13l-4.600 1.500-5-1.500-5 1.500zM5.700 1.500V13M10.700 3v11.500" fill="none" stroke="currentColor" stroke-width="1.100"/></svg></button>
    <button class="mr-5 ml-4" aria-label="Fit page"><svg class="h-4 w-4" viewBox="0 0 16 16"><path d="M5 1.500H1.500V5M1.500 11v3.500H5M11 1.500h3.500V5M14.500 11v3.500H11M4.500 5h7v6h-7z" fill="none" stroke="currentColor" stroke-width="1.200"/></svg></button>
  </footer>

  <script>
    const STEP = 38.55;

    // One major tick with its label and one minor tick for every 20 units
    let x = '<path d="M0 17.5H9999" stroke="#e3e3e8"/>';
    for (let i = 0; i < 27; i++) {
      const p = Math.round(22 + i * STEP) + 0.5;
      x += `<path d="M${p} 0v18M${p + 19} 12v6" stroke="#dcdce0"/><text x="${p + 2}" y="10" fill="#6f6f74">${-600 + i * 20}</text>`;
    }
    document.getElementById('ruler-x').innerHTML = x;

    let y = '<path d="M17.5 0V9999" stroke="#e3e3e8"/>';
    for (let i = 0; i < 13; i++) {
      const p = Math.floor(i * STEP) + 0.5;
      y += `<path d="M0 ${p}h18M12 ${p + 19}h6" stroke="#dcdce0"/><text text-anchor="end" transform="translate(10 ${p + 1}) rotate(-90)" fill="#6f6f74">${-380 + i * 20}</text>`;
    }
    document.getElementById('ruler-y').innerHTML = y;

    const colors = [
      '#9c1421', '#bf1238', '#db4a6c', '#e86887', '#ee9dae', '#28787d', '#35a0ae', '#43b7d3', '#5bd4dc', '#a6f0f7',
      '#e05528', '#f17f40', '#f09728', '#fcb017', '#f4c56d', '#168e75', '#1fa88e', '#26c0aa', '#68d2c0', '#84e4d3',
      '#912a5c', '#ba4b87', '#d968a3', '#f083c3', '#ecc2dd', '#5a8517', '#76a02c', '#97b92c', '#aecb58', '#d0da91',
      '#20209a', '#3b3cc7', '#6b44d9', '#8f6ce6', '#aa92ea', '#f2c915', '#f3d838', '#ebe22e', '#f6f35b', '#fbfa8a',
      '#9a4ac9', '#b54fd8', '#c573ea', '#b98aef', '#d2a2f2', '#2d7a44', '#3b9354', '#55a877', '#65b586', '#91d1aa',
      '#da362e', '#e64c44', '#ea6666', '#f27b7f', '#f19086', '#263f97', '#3152bd', '#3565e4', '#5b86ee', '#85aaf0',
      '#6c300d', '#8e3b0b', '#a44230', '#c4674a', '#dd7152', '#2182c4', '#2692d8', '#4ba6ee', '#45bfdb', '#6fd9e4',
      '#74503b', '#8f5b43', '#b06a50', '#cf7956', '#e99369', '#8b857c', '#aaa294', '#ccc5b6', '#e7e0cf', '#f5f0e2',
      '#121417', '#22262a', '#373b40', '#4d5156', '#74777b', '#b1b2b6', '#c6c7ca', '#dadbde', '#e8e9eb', '#f5f5f6'
    ];
    document.getElementById('swatches').innerHTML = colors
      .map(c => `<button class="flex-1 rounded-[3px]" style="background:${c}" aria-label="${c}"></button>`)
      .join('');
  </script>
</body>
</html>
